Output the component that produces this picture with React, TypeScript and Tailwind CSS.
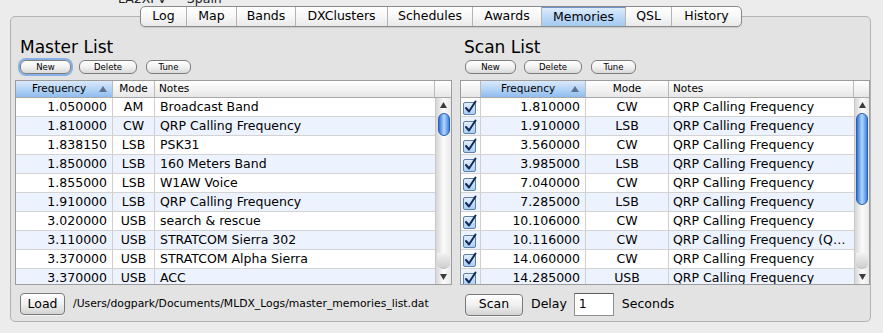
import React from "react";

type Row = [string, string, string];

const masterRows: Row[] = [
  ["1.050000", "AM", "Broadcast Band"],
  ["1.810000", "CW", "QRP Calling Frequency"],
  ["1.838150", "LSB", "PSK31"],
  ["1.850000", "LSB", "160 Meters Band"],
  ["1.855000", "LSB", "W1AW Voice"],
  ["1.910000", "LSB", "QRP Calling Frequency"],
  ["3.020000", "USB", "search & rescue"],
  ["3.110000", "USB", "STRATCOM Sierra 302"],
  ["3.370000", "USB", "STRATCOM Alpha Sierra"],
  ["3.370000", "USB", "ACC"],
];

const scanRows: Row[] = [
  ["1.810000", "CW", "QRP Calling Frequency"],
  ["1.910000", "LSB", "QRP Calling Frequency"],
  ["3.560000", "CW", "QRP Calling Frequency"],
  ["3.985000", "LSB", "QRP Calling Frequency"],
  ["7.040000", "CW", "QRP Calling Frequency"],
  ["7.285000", "LSB", "QRP Calling Frequency"],
  ["10.106000", "CW", "QRP Calling Frequency"],
  ["10.116000", "CW", "QRP Calling Frequency (Q…"],
  ["14.060000", "CW", "QRP Calling Frequency"],
  ["14.285000", "USB", "QRP Calling Frequency"],
];

const tabs = [
  { label: "Log", w: "w-[46px]" },
  { label: "Map", w: "w-[50px]" },
  { label: "Bands", w: "w-[59px]" },
  { label: "DXClusters", w: "w-[92px]" },
  { label: "Schedules", w: "w-[85px]" },
  { label: "Awards", w: "w-[69px]" },
  { label: "Memories", w: "w-[84px]" },
  { label: "QSL", w: "w-[46px]" },
  { label: "History", w: "w-[69px]" },
];

function SortArrow() {
  return (
    <svg width="8" height="6" viewBox="0 0 8 6" className="shrink-0">
      <path d="M4 0 L8 6 L0 6 Z" fill="#5d7290" />
    </svg>
  );
}

function Check() {
  return (
    <svg width="15" height="15" viewBox="0 0 15 15">
      <defs>
        <linearGradient id="cbg" x1="0" y1="0" x2="0" y2="1">
          <stop offset="0" stopColor="#e4f0fd" />
          <stop offset="1" stopColor="#a9cdf2" />
        </linearGradient>
      </defs>
      <rect x="0.5" y="2.5" width="12" height="12" rx="1.5" fill="url(#cbg)" stroke="#5f7ea8" />
      <path d="M3 8 L6 11.5 L12.5 1.5" fill="none" stroke="#0f2a58" strokeWidth="2" strokeLinecap="round" strokeLinejoin="round" />
    </svg>
  );
}

function SmallButton({ label, w, focused }: { label: string; w: string; focused?: boolean }) {
  return (
    <div
      className={`${w} h-[14px] rounded-[6px] border border-[#7d7d7d] bg-gradient-to-b from-white via-[#f1f1f1] to-[#d9d9d9] flex items-center justify-center text-[8.5px] leading-none text-black ${
        focused ? "shadow-[0_0_0_2px_#86b0e8]" : ""
      }`}
    >
      {label}
    </div>
  );
}

function BigButton({ label, w }: { label: string; w: string }) {
  return (
    <div
      className={`${w} h-[22px] rounded-[4px] border border-[#7a7a7a] bg-gradient-to-b from-white via-[#f0f0f0] to-[#d3d3d3] flex items-center justify-center text-[12.5px] text-black shadow-[0_1px_0_#f4f4f4]`}
    >
      {label}
    </div>
  );
}

function Scrollbar({ w, thumbH }: { w: string; thumbH: string }) {
  return (
    <div className={`${w} h-full flex flex-col bg-gradient-to-r from-[#d6d6d6] via-[#fbfbfb] to-[#e9e9e9] border-l border-[#c8c8c8]`}>
      <div className="h-[14px] flex items-center justify-center">
        <svg width="7" height="6" viewBox="0 0 7 6">
          <path d="M3.5 0 L7 6 L0 6 Z" fill="#3c3c3c" />
        </svg>
      </div>
      <div className="flex-1 flex flex-col items-center pt-[1px]">
        <div className={`w-[12px] ${thumbH} rounded-full border border-[#2b5fae] bg-gradient-to-r from-[#2f72d8] via-[#b4d8fb] to-[#3b82e2]`} />
      </div>
      <div className="h-[16px] mx-[1px] rounded-b-full bg-gradient-to-b from-[#f2f2f2] to-[#cfcfcf] border-b border-[#bdbdbd]" />
      <div className="h-[15px] flex items-center justify-center">
        <svg width="7" height="6" viewBox="0 0 7 6">
          <path d="M0 0 L7 0 L3.5 6 Z" fill="#3c3c3c" />
        </svg>
      </div>
    </div>
  );
}

const headCell = "h-full flex items-center border-r border-[#b9b9b9] text-[10.5px]";
const plainHead = "bg-gradient-to-b from-white to-[#e7e7e7]";
const sortHead = "bg-gradient-to-b from-[#d9e9fb] via-[#b5d4f5] to-[#8fbdee]";

function MasterTable() {
  return (
    <div className="w-[437px] h-[205px] border border-[#9c9c9c] bg-white flex flex-col">
      <div className="h-[17px] flex border-b border-[#a9a9a9]">
        <div className={`${headCell} ${sortHead} w-[97px] pl-[16px] pr-[5px] justify-between`}>
          <span>Frequency</span>
          <SortArrow />
        </div>
        <div className={`${headCell} ${plainHead} w-[42px] justify-center`}>Mode</div>
        <div className={`${headCell} ${plainHead} w-[280px] pl-[4px]`}>Notes</div>
        <div className={`${plainHead} flex-1`} />
      </div>
      <div className="flex-1 flex overflow-hidden">
        <div className="w-[419px] flex flex-col">
          {masterRows.map((r, i) => (
            <div key={i} className={`h-[19px] shrink-0 flex border-b border-[#d3d3d3] text-[12.5px] ${i % 2 ? "bg-[#edf3fe]" : "bg-white"}`}>
              <div className="w-[97px] h-full border-r border-[#cfcfcf] flex items-center justify-end pr-[5px]">{r[0]}</div>
              <div className="w-[42px] h-full border-r border-[#cfcfcf] flex items-center justify-center">{r[1]}</div>
              <div className="w-[280px] h-full flex items-center pl-[5px] whitespace-nowrap">{r[2]}</div>
            </div>
          ))}
        </div>
        <Scrollbar w="w-[16px]" thumbH="h-[23px]" />
      </div>
    </div>
  );
}

function ScanTable() {
  return (
    <div className="w-[410px] h-[205px] border border-[#9c9c9c] bg-white flex flex-col">
      <div className="h-[17px] flex border-b border-[#a9a9a9]">
        <div className={`${headCell} ${plainHead} w-[20px]`} />
        <div className={`${headCell} ${sortHead} w-[105px] pl-[20px] pr-[6px] justify-between`}>
          <span>Frequency</span>
          <SortArrow />
        </div>
        <div className={`${headCell} ${plainHead} w-[83px] justify-center`}>Mode</div>
        <div className={`${headCell} ${plainHead} w-[185px] pl-[4px]`}>Notes</div>
        <div className={`${plainHead} flex-1`} />
      </div>
      <div className="flex-1 flex overflow-hidden">
        <div className="w-[393px] flex flex-col">
          {scanRows.map((r, i) => (
            <div key={i} className={`h-[19px] shrink-0 flex border-b border-[#d3d3d3] text-[12.5px] ${i % 2 ? "bg-[#edf3fe]" : "bg-white"}`}>
              <div className="w-[20px] h-full border-r border-[#cfcfcf] flex items-center justify-center">
                <Check />
              </div>
              <div className="w-[105px] h-full border-r border-[#cfcfcf] flex items-center justify-end pr-[5px]">{r[0]}</div>
              <div className="w-[83px] h-full border-r border-[#cfcfcf] flex items-center justify-center">{r[1]}</div>
              <div className="w-[185px] h-full flex items-center pl-[4px] whitespace-nowrap overflow-hidden">{r[2]}</div>
            </div>
          ))}
        </div>
        <Scrollbar w="w-[15px]" thumbH="h-[92px]" />
      </div>
    </div>
  );
}

export default function App() {
  return (
    <div className="w-[883px] h-[333px] overflow-hidden bg-[#ececec] text-black" style={{ fontFamily: '"DejaVu Sans", sans-serif' }}>
      {/* window title, mostly cut off */}
      <div className="h-[6px] pl-[118px] flex items-end">
        <div className="text-[12.5px] leading-[15px] text-[#222] whitespace-nowrap">LA2XPV — Spain</div>
      </div>

      {/* tab strip */}
      <div className="relative z-10 ml-[140px] flex">
        <div className="flex h-[21px] rounded-[5px] border border-[#8a8a8a] overflow-hidden bg-gradient-to-b from-white via-[#f7f7f7] to-[#e9e9e9] shadow-[0_1px_1px_rgba(0,0,0,0.12)]">
          {tabs.map((t, i) => (
            <div
              key={t.label}
              className={`${t.w} h-full flex items-center justify-center text-[12.5px] ${i < tabs.length - 1 ? "border-r border-[#b4b4b4]" : ""} ${
                t.label === "Memories" ? "bg-gradient-to-b from-[#dcebfb] via-[#bcd9f7] to-[#a3caf1] border-t border-t-[#6d95c8]" : ""
              }`}
            >
              {t.label}
            </div>
          ))}
        </div>
      </div>

      {/* tab content box */}
      <div className="-mt-[11px] ml-[10px] w-[861px] h-[306px] rounded-[5px] border border-[#b3b3b3] bg-[#e3e3e3] flex pl-[4px] gap-[8px]">
        <div className="w-[437px] flex flex-col pt-[18px]">
          <div className="h-[24px] pl-[5px] text-[17px] leading-[24px]">Master List</div>
          <div className="mt-[1px] pl-[5px] flex gap-[8px]">
            <SmallButton label="New" w="w-[51px]" focused />
            <SmallButton label="Delete" w="w-[58px]" />
            <div className="ml-[1px]">
              <SmallButton label="Tune" w="w-[45px]" />
            </div>
          </div>
          <div className="mt-[6px]">
            <MasterTable />
          </div>
          <div className="mt-[8px] pl-[5px] flex items-center gap-[8px]">
            <BigButton label="Load" w="w-[45px]" />
            <span className="text-[10.8px]">/Users/dogpark/Documents/MLDX_Logs/master_memories_list.dat</span>
          </div>
        </div>

        <div className="w-[410px] flex flex-col pt-[18px]">
          <div className="h-[24px] pl-[4px] text-[17px] leading-[24px]">Scan List</div>
          <div className="mt-[1px] pl-[5px] flex gap-[8px]">
            <SmallButton label="New" w="w-[51px]" />
            <SmallButton label="Delete" w="w-[58px]" />
            <div className="ml-[1px]">
              <SmallButton label="Tune" w="w-[45px]" />
            </div>
          </div>
          <div className="mt-[6px]">
            <ScanTable />
          </div>
          <div className="mt-[8px] pl-[5px] flex items-center">
            <BigButton label="Scan" w="w-[58px]" />
            <span className="ml-[8px] text-[12.5px]">Delay</span>
            <div className="ml-[7px] w-[40px] h-[23px] bg-white border border-[#8f8f8f] border-t-[#5f5f5f] flex items-center pl-[4px] text-[12.5px]">1</div>
            <span className="ml-[8px] text-[12.5px]">Seconds</span>
          </div>
        </div>
      </div>
    </div>
  );
}
